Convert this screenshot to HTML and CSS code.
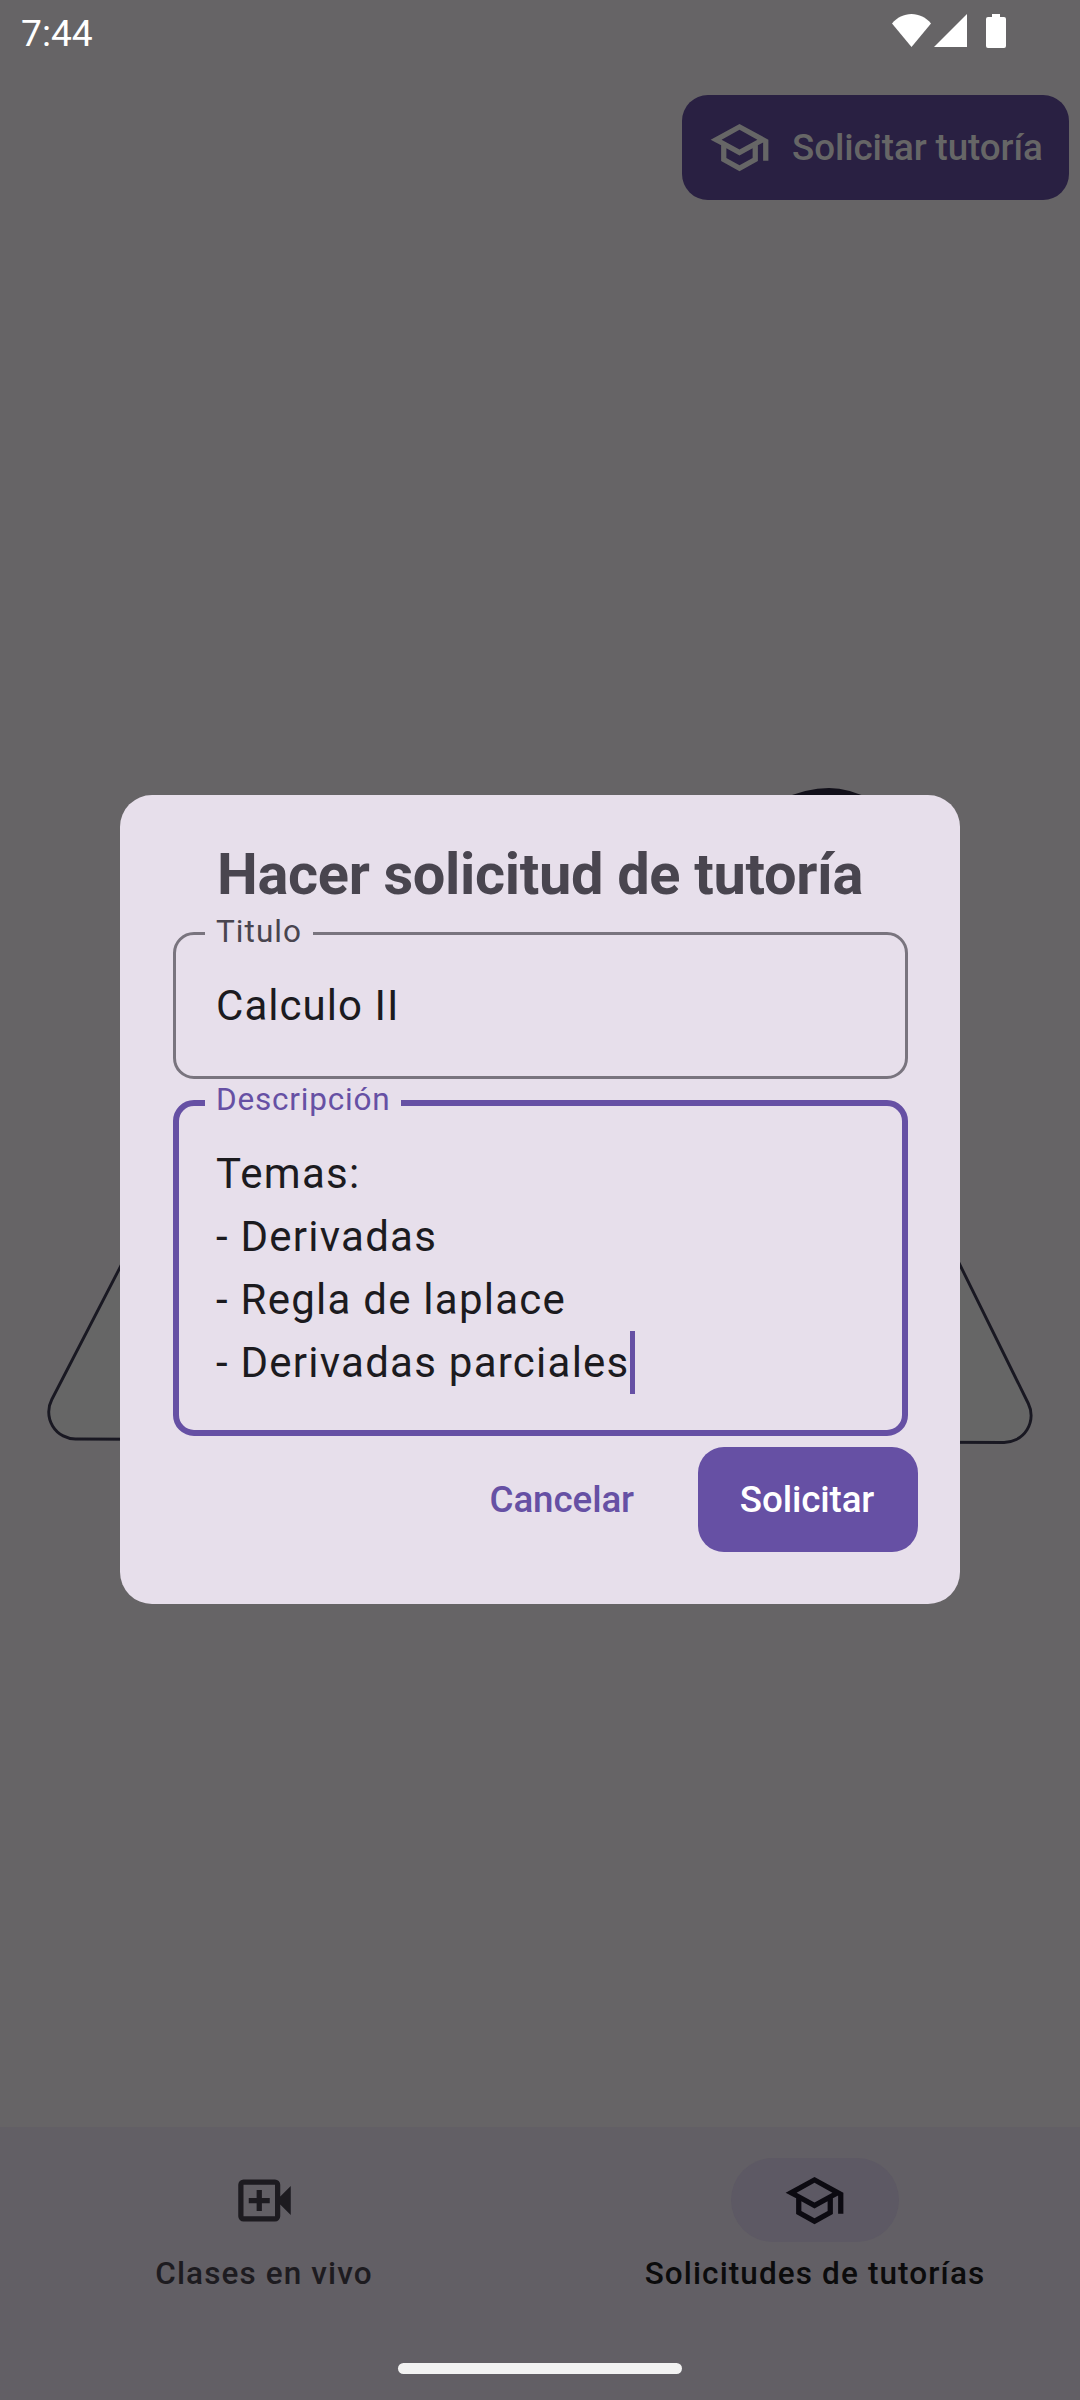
FILE: index.html
```html
<!DOCTYPE html>
<html lang="es">
<head>
<meta charset="utf-8">
<title>Solicitudes de tutorías</title>
<link rel="stylesheet" href="styles.css">
</head>
<body>
<div class="screen">
  <header class="status">
    <span class="clock">7:44</span>
    <svg class="status-icons" width="116" height="36" viewBox="0 0 116 36">
      <path d="M0 9.500C5 3.500 12 0 19.500 0S34 3.500 39 9.500L19.500 33Z"/>
      <path d="M75 0V33H42Z"/>
      <path d="M100 0h8v3h4q2 0 2 2v27q0 2-2 2H96q-2 0-2-2V5q0-2 2-2h4Z"/>
    </svg>
  </header>
  <main class="content">
    <button class="request">
      <svg class="icon" viewBox="0 0 24 24"><path d="M12 3L1 9l4 2.180v6L12 21l7-3.820v-6l2-1.090V17h2V9L12 3zm6.820 6L12 12.720 5.180 9 12 5.280 18.820 9zM17 15.990l-5 2.730-5-2.730v-3.720L12 15l5-2.730v3.720z"/></svg>
      <span class="caption">Solicitar tutoría</span>
    </button>
  </main>
  <svg class="art" width="1080" height="700" viewBox="0 780 1080 700">
    <path class="sheet" d="M159 1192Q172 1172 196 1172H889Q913 1172 924 1192L1028.300 1403.500A27 27 0 0 1 1004 1442.500L75.500 1439A27 27 0 0 1 51.800 1399.500Z"/>
    <path class="head" d="M780 800Q806 788 829 788Q849 788 872 800Z"/>
  </svg>
  <nav class="tabs">
    <div class="tab">
      <span class="pill"><svg class="icon" viewBox="0 0 24 24"><path d="M18 10.480V6a2 2 0 0 0-2-2H4a2 2 0 0 0-2 2v12a2 2 0 0 0 2 2h12a2 2 0 0 0 2-2v-4.480l4 3.980v-11l-4 3.980zM16 18H4V6h12v12zM9 8h2v3h3v2h-3v3H9v-3H6v-2h3z"/></svg></span>
      <span class="name">Clases en vivo</span>
    </div>
    <div class="tab selected">
      <span class="pill"><svg class="icon" viewBox="0 0 24 24"><path d="M12 3L1 9l4 2.180v6L12 21l7-3.820v-6l2-1.090V17h2V9L12 3zm6.820 6L12 12.720 5.180 9 12 5.280 18.820 9zM17 15.990l-5 2.730-5-2.730v-3.720L12 15l5-2.730v3.720z"/></svg></span>
      <span class="name">Solicitudes de tutorías</span>
    </div>
  </nav>
  <div class="handle"></div>
  <section class="dialog">
    <h1>Hacer solicitud de tutoría</h1>
    <div class="field single"><span class="label">Titulo</span>Calculo II</div>
    <div class="field focused"><span class="label">Descripción</span>Temas:<br>- Derivadas<br>- Regla de laplace<br>- Derivadas parciales<i class="caret"></i></div>
    <div class="actions">
      <button class="cancel">Cancelar</button>
      <button class="submit">Solicitar</button>
    </div>
  </section>
</div>
</body>
</html>
```
FILE: styles.css
```css
* { box-sizing: border-box; }
body { margin: 0; font-family: Roboto, sans-serif; }
button { border: 0; font: 500 36.75px/52.5px Roboto, sans-serif; letter-spacing: -.1px; white-space: nowrap; }
.screen { position: relative; width: 1080px; height: 2400px; overflow: hidden; background: #666466; display: flex; flex-direction: column; }
.status { height: 63px; display: flex; justify-content: space-between; padding: 14px 72px 0 21px; }
.clock { color: #fff; font: 400 37.2px/38px Roboto, sans-serif; }
.status-icons { fill: #fff; }
.content { flex: 1; display: flex; justify-content: flex-end; align-items: flex-start; padding: 32px 11px 0 0; }
.request { width: 387px; height: 105px; border-radius: 26px; background: #292042; color: #666; display: flex; align-items: center; padding: 0 0 0 26px; gap: 21px; }
.caption { padding-top: 2px; }
.icon { width: 63px; height: 63px; fill: currentColor; display: block; }
.art { position: absolute; left: 0; top: 780px; }
.sheet { fill: #666; stroke: #191822; stroke-width: 2.9; }
.head { fill: #12101a; }
.tabs { height: 273px; background: #625f65; display: flex; padding: 31px 1px 0 0; gap: 23px; color: #1d1b20; }
.tab { flex: 1; display: flex; flex-direction: column; align-items: center; gap: 11px; }
.pill { width: 168px; height: 84px; border-radius: 42px; display: flex; align-items: center; justify-content: center; }
.selected .pill { background: #5d5964; color: #0c0a11; padding-right: 1px; }
.selected .name { color: #0b0b0c; }
.name { font: 500 31.5px/42px Roboto, sans-serif; letter-spacing: 1.11px; white-space: nowrap; }
.handle { position: absolute; left: 398px; top: 2363px; width: 284px; height: 11px; border-radius: 6px; background: #f2f2f2; }
.dialog { position: absolute; left: 120px; top: 795px; width: 840px; height: 809px; border-radius: 32px; background: #e7dfeb; padding: 42px 52px 0 53px; display: flex; flex-direction: column; }
h1 { margin: 0; padding-right: 1px; text-align: center; color: #49454f; font: 700 57.75px/74px Roboto, sans-serif; letter-spacing: -.33px; height: 95px; white-space: nowrap; }
.field { position: relative; height: 147px; border: 3px solid #79747e; border-radius: 21px; padding: 39px 40px; font-size: 42px; line-height: 63px; letter-spacing: 1.25px; color: #1c1b1f; white-space: nowrap; }
.single { letter-spacing: 1.05px; }
.focused { height: 336px; margin-top: 21px; border: 6px solid #6650a4; padding: 36px 37px; }
.label { position: absolute; left: 29px; top: -24px; padding: 0 11px; background: #e7dfeb; color: #49454f; font-size: 31.5px; line-height: 42px; letter-spacing: 1.05px; }
.focused .label { left: 26px; top: -27px; color: #6650a4; letter-spacing: .8px; }
.caret { display: inline-block; width: 5px; height: 63px; background: #6650a4; vertical-align: top; }
.actions { display: flex; justify-content: flex-end; margin: 11px -10px 0 0; gap: 21px; }
.cancel, .submit { height: 105px; border-radius: 26px; padding: 2px 43px 0 41px; background: none; color: #6650a4; }
.submit { width: 220px; background: #6650a4; color: #fff; }
```
